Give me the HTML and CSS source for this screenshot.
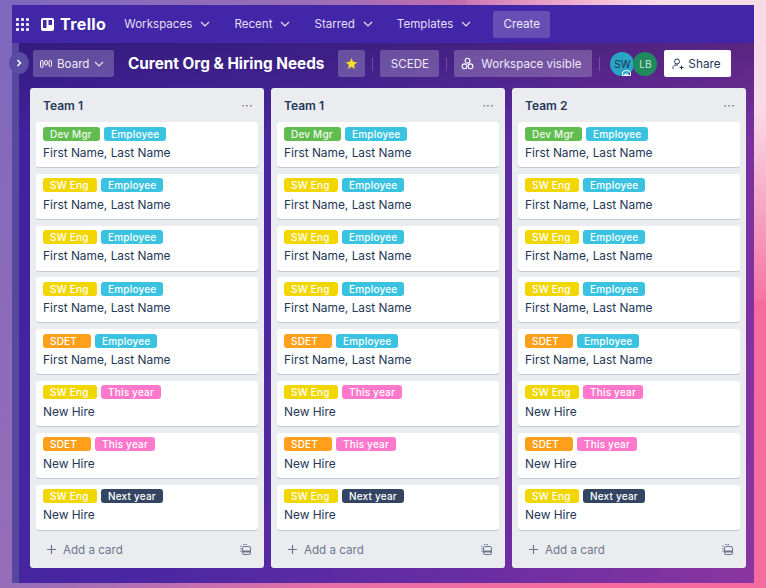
FILE: index.html
```html
<!DOCTYPE html>
<html lang="en">
<head>
    <meta charset="UTF-8">
    <title>Curent Org &amp; Hiring Needs | Trello</title>
    <link rel="stylesheet" href="styles.css">
</head>
<body>
    <div class="window">
        <header class="topbar">
            <svg class="apps" width="13" height="13" viewBox="0 0 13 13" fill="#fff">
                <rect x="0" y="0" width="3" height="3" rx=".7"/><rect x="5" y="0" width="3" height="3" rx=".7"/><rect x="10" y="0" width="3" height="3" rx=".7"/>
                <rect x="0" y="5" width="3" height="3" rx=".7"/><rect x="5" y="5" width="3" height="3" rx=".7"/><rect x="10" y="5" width="3" height="3" rx=".7"/>
                <rect x="0" y="10" width="3" height="3" rx=".7"/><rect x="5" y="10" width="3" height="3" rx=".7"/><rect x="10" y="10" width="3" height="3" rx=".7"/>
            </svg>
            <div class="logo">
                <svg width="13" height="13" viewBox="0 0 13 13"><path fill="#fff" fill-rule="evenodd" d="M2 0h9a2 2 0 0 1 2 2v9a2 2 0 0 1-2 2H2a2 2 0 0 1-2-2V2a2 2 0 0 1 2-2zm0 2v8h3.500V2zm5.500 0v5H11V2z"/></svg>
                <span>Trello</span>
            </div>
            <nav class="menu">
                <span class="menu-item">Workspaces <svg class="chev" viewBox="0 0 10 6"><path d="M1 1l4 4 4-4"/></svg></span>
                <span class="menu-item">Recent <svg class="chev" viewBox="0 0 10 6"><path d="M1 1l4 4 4-4"/></svg></span>
                <span class="menu-item">Starred <svg class="chev" viewBox="0 0 10 6"><path d="M1 1l4 4 4-4"/></svg></span>
                <span class="menu-item">Templates <svg class="chev" viewBox="0 0 10 6"><path d="M1 1l4 4 4-4"/></svg></span>
            </nav>
            <button class="create" type="button">Create</button>
        </header>

        <div class="content">
            <div class="side-strip">
                <span class="side-toggle"><svg width="6" height="8" viewBox="0 0 6 8"><path d="M1.500 1l3 3-3 3" fill="none" stroke="#fff" stroke-width="1.500"/></svg></span>
            </div>
            <main class="board">
                <div class="board-bar">
                    <button class="bar-btn view-btn" type="button">
                        <svg width="12" height="8" viewBox="0 0 12 8" fill="none" stroke="#fff" stroke-width="1"><rect x=".5" y=".5" width="2.500" height="7" rx="1"/><rect x="4.750" y=".5" width="2.500" height="4.500" rx="1"/><rect x="9" y=".5" width="2.500" height="6" rx="1"/></svg>
                        Board
                        <svg class="chev" viewBox="0 0 10 6"><path d="M1 1l4 4 4-4"/></svg>
                    </button>
                    <h1 class="board-title">Curent Org &amp; Hiring Needs</h1>
                    <button class="bar-btn star-btn" type="button">
                        <svg width="13" height="13" viewBox="0 0 24 24"><path fill="#f5dd29" d="M12 2l3 6.900 7.500.7-5.700 5 1.700 7.400L12 18l-6.500 4 1.700-7.400-5.700-5L9 8.900z"/></svg>
                    </button>
                    <span class="divider"></span>
                    <button class="bar-btn scede-btn" type="button">SCEDE</button>
                    <span class="divider"></span>
                    <button class="bar-btn visible-btn" type="button">
                        <svg width="13" height="13" viewBox="0 0 14 14" fill="none" stroke="#fff" stroke-width="1.200"><circle cx="7" cy="4" r="2.600"/><circle cx="3.800" cy="10" r="2.600"/><circle cx="10.200" cy="10" r="2.600"/></svg>
                        Workspace visible
                    </button>
                    <span class="divider"></span>
                    <div class="avatars">
                        <span class="avatar avatar-sw">SW
                            <svg class="avatar-badge" width="9" height="6" viewBox="0 0 9 6" fill="none" stroke="#fff" stroke-width="1"><path d="M.5 5.500V3a4 2.500 0 0 1 8 0v2.500zM3 5.500V4h3v1.500"/></svg>
                        </span>
                        <span class="avatar avatar-lb">LB</span>
                    </div>
                    <button class="share-btn" type="button">
                        <svg width="12" height="12" viewBox="0 0 12 12" fill="none" stroke="#253858" stroke-width="1"><circle cx="5" cy="3.500" r="2.500"/><path d="M1 11V9.500C1 8 2.500 7 4 7h2M9.500 7.500v4M7.500 9.500h4"/></svg>
                        Share
                    </button>
                </div>

                <div class="lists">
                    <section class="list">
                        <div class="list-head"><h2>Team 1</h2><span class="dots">···</span></div>
                        <div class="card"><div class="labels"><span class="label green">Dev Mgr</span><span class="label sky">Employee</span></div><p>First Name, Last Name</p></div>
                        <div class="card"><div class="labels"><span class="label yellow">SW Eng</span><span class="label sky">Employee</span></div><p>First Name, Last Name</p></div>
                        <div class="card"><div class="labels"><span class="label yellow">SW Eng</span><span class="label sky">Employee</span></div><p>First Name, Last Name</p></div>
                        <div class="card"><div class="labels"><span class="label yellow">SW Eng</span><span class="label sky">Employee</span></div><p>First Name, Last Name</p></div>
                        <div class="card"><div class="labels"><span class="label orange">SDET</span><span class="label sky">Employee</span></div><p>First Name, Last Name</p></div>
                        <div class="card"><div class="labels"><span class="label yellow">SW Eng</span><span class="label pink">This year</span></div><p>New Hire</p></div>
                        <div class="card"><div class="labels"><span class="label orange">SDET</span><span class="label pink">This year</span></div><p>New Hire</p></div>
                        <div class="card"><div class="labels"><span class="label yellow">SW Eng</span><span class="label navy">Next year</span></div><p>New Hire</p></div>
                        <div class="list-foot">
                            <span class="add-card"><svg width="11" height="11" viewBox="0 0 11 11"><path d="M5.500 1v9M1 5.500h9" stroke="#6b778c" stroke-width="1.200"/></svg>Add a card</span>
                            <svg class="template" width="11" height="11" viewBox="0 0 11 11" fill="none" stroke="#6b778c"><path d="M1 8V1.500h.01M3 .5h5" stroke-dasharray="1.500 1"/><rect x="2.500" y="2.500" width="8" height="8" rx="1.500"/><path d="M3 7.500h7" stroke-width="2"/></svg>
                        </div>
                    </section>

                    <section class="list">
                        <div class="list-head"><h2>Team 1</h2><span class="dots">···</span></div>
                        <div class="card"><div class="labels"><span class="label green">Dev Mgr</span><span class="label sky">Employee</span></div><p>First Name, Last Name</p></div>
                        <div class="card"><div class="labels"><span class="label yellow">SW Eng</span><span class="label sky">Employee</span></div><p>First Name, Last Name</p></div>
                        <div class="card"><div class="labels"><span class="label yellow">SW Eng</span><span class="label sky">Employee</span></div><p>First Name, Last Name</p></div>
                        <div class="card"><div class="labels"><span class="label yellow">SW Eng</span><span class="label sky">Employee</span></div><p>First Name, Last Name</p></div>
                        <div class="card"><div class="labels"><span class="label orange">SDET</span><span class="label sky">Employee</span></div><p>First Name, Last Name</p></div>
                        <div class="card"><div class="labels"><span class="label yellow">SW Eng</span><span class="label pink">This year</span></div><p>New Hire</p></div>
                        <div class="card"><div class="labels"><span class="label orange">SDET</span><span class="label pink">This year</span></div><p>New Hire</p></div>
                        <div class="card"><div class="labels"><span class="label yellow">SW Eng</span><span class="label navy">Next year</span></div><p>New Hire</p></div>
                        <div class="list-foot">
                            <span class="add-card"><svg width="11" height="11" viewBox="0 0 11 11"><path d="M5.500 1v9M1 5.500h9" stroke="#6b778c" stroke-width="1.200"/></svg>Add a card</span>
                            <svg class="template" width="11" height="11" viewBox="0 0 11 11" fill="none" stroke="#6b778c"><path d="M1 8V1.500h.01M3 .5h5" stroke-dasharray="1.500 1"/><rect x="2.500" y="2.500" width="8" height="8" rx="1.500"/><path d="M3 7.500h7" stroke-width="2"/></svg>
                        </div>
                    </section>

                    <section class="list">
                        <div class="list-head"><h2>Team 2</h2><span class="dots">···</span></div>
                        <div class="card"><div class="labels"><span class="label green">Dev Mgr</span><span class="label sky">Employee</span></div><p>First Name, Last Name</p></div>
                        <div class="card"><div class="labels"><span class="label yellow">SW Eng</span><span class="label sky">Employee</span></div><p>First Name, Last Name</p></div>
                        <div class="card"><div class="labels"><span class="label yellow">SW Eng</span><span class="label sky">Employee</span></div><p>First Name, Last Name</p></div>
                        <div class="card"><div class="labels"><span class="label yellow">SW Eng</span><span class="label sky">Employee</span></div><p>First Name, Last Name</p></div>
                        <div class="card"><div class="labels"><span class="label orange">SDET</span><span class="label sky">Employee</span></div><p>First Name, Last Name</p></div>
                        <div class="card"><div class="labels"><span class="label yellow">SW Eng</span><span class="label pink">This year</span></div><p>New Hire</p></div>
                        <div class="card"><div class="labels"><span class="label orange">SDET</span><span class="label pink">This year</span></div><p>New Hire</p></div>
                        <div class="card"><div class="labels"><span class="label yellow">SW Eng</span><span class="label navy">Next year</span></div><p>New Hire</p></div>
                        <div class="list-foot">
                            <span class="add-card"><svg width="11" height="11" viewBox="0 0 11 11"><path d="M5.500 1v9M1 5.500h9" stroke="#6b778c" stroke-width="1.200"/></svg>Add a card</span>
                            <svg class="template" width="11" height="11" viewBox="0 0 11 11" fill="none" stroke="#6b778c"><path d="M1 8V1.500h.01M3 .5h5" stroke-dasharray="1.500 1"/><rect x="2.500" y="2.500" width="8" height="8" rx="1.500"/><path d="M3 7.500h7" stroke-width="2"/></svg>
                        </div>
                    </section>
                </div>
            </main>
        </div>
    </div>
</body>
</html>
```

FILE: styles.css
```css
* {
    box-sizing: border-box;
}
html, body {
    height: 100%;
}
body {
    margin: 0;
    padding: 5px 12px;
    overflow: hidden;
    font-family: Inter, "Liberation Sans", sans-serif;
    background: linear-gradient(115deg, #7d68bd 0%, #9a6eb8 30%, #e86ea6 58%, #f76c9e 85%);
}
body::before {
    content: "";
    position: fixed;
    top: 0;
    right: 0;
    width: 300px;
    height: 300px;
    background: radial-gradient(circle at top right, #f9dbe8 25%, rgba(249, 219, 232, 0) 75%);
    z-index: -1;
}
button {
    font-family: inherit;
    border: none;
    cursor: pointer;
}
.window {
    height: 578px;
    display: flex;
    flex-direction: column;
}

/* top bar */
.topbar {
    height: 38px;
    flex: none;
    display: flex;
    align-items: center;
    padding-left: 4px;
    background-color: #4127a8;
    color: #fff;
}
.apps {
    opacity: .9;
}
.logo {
    display: flex;
    align-items: center;
    gap: 6px;
    margin-left: 12px;
    font-size: 16px;
    font-weight: 700;
    letter-spacing: .4px;
}
.menu {
    display: flex;
    gap: 24px;
    margin-left: 18px;
}
.menu-item {
    display: flex;
    align-items: center;
    gap: 8px;
    font-size: 11.600px;
    color: #e4dff5;
}
.chev {
    width: 10px;
    height: 6px;
    fill: none;
    stroke: #e4dff5;
    stroke-width: 1.200;
}
.create {
    height: 27px;
    width: 57px;
    margin-left: 22px;
    border-radius: 2px;
    font-size: 11.600px;
    color: #eeeafa;
    background-color: #674eb5;
}

/* board */
.content {
    flex: 1;
    display: flex;
    min-height: 0;
}
.side-strip {
    width: 7px;
    flex: none;
    position: relative;
    background-color: #56479f;
}
.side-toggle {
    position: absolute;
    left: -3px;
    top: 9px;
    width: 20px;
    height: 22px;
    border-radius: 50%;
    display: flex;
    align-items: center;
    justify-content: center;
    background-color: #5a4ca2;
    z-index: 1;
}
.board {
    flex: 1;
    padding: 7px 8px 0 11px;
    background:
        linear-gradient(to bottom, rgba(20, 10, 40, .28), rgba(20, 10, 40, 0) 18%),
        linear-gradient(110deg, #3f229e 0%, #4b27a3 35%, #6c2ea2 72%, #8a35a0 100%);
}
.board-bar {
    height: 27px;
    display: flex;
    align-items: center;
    margin-left: 3px;
    color: #fff;
}
.bar-btn {
    height: 27px;
    display: flex;
    align-items: center;
    border-radius: 2px;
    font-size: 11.600px;
    color: #efeaf7;
    background-color: rgba(255, 255, 255, .22);
}
.view-btn {
    width: 81px;
    padding-left: 7px;
    gap: 5px;
}
.board-title {
    margin: 0 14px;
    font-size: 15.300px;
    font-weight: 700;
    white-space: nowrap;
    color: #fff;
}
.star-btn {
    width: 27px;
    justify-content: center;
}
.divider {
    width: 1px;
    height: 14px;
    margin: 0 7px;
    background-color: rgba(255, 255, 255, .2);
}
.scede-btn {
    width: 59px;
    justify-content: center;
}
.visible-btn {
    width: 138px;
    padding-left: 7px;
    gap: 7px;
    white-space: nowrap;
}
.avatars {
    display: flex;
    margin-left: 3px;
}
.avatar {
    width: 24px;
    height: 24px;
    border-radius: 50%;
    display: flex;
    align-items: center;
    justify-content: center;
    position: relative;
    font-size: 10px;
}
.avatar-sw {
    background-color: #2aa3c4;
    color: #17395c;
}
.avatar-lb {
    margin-left: -1px;
    background-color: #1f8a5d;
    color: #cfe8dc;
}
.avatar-badge {
    position: absolute;
    right: 3px;
    bottom: 0;
}
.share-btn {
    width: 67px;
    height: 27px;
    margin-left: 7px;
    padding: 0 0 0 8px;
    display: flex;
    align-items: center;
    gap: 4px;
    border-radius: 2px;
    font-size: 11.800px;
    color: #253858;
    background-color: #fff;
}

/* lists */
.lists {
    display: flex;
    gap: 7px;
    margin-top: 11px;
}
.list {
    width: 234px;
    height: 480px;
    padding: 0 6px;
    border-radius: 3px;
    background-color: #ebecf0;
}
.list-head {
    height: 34px;
    display: flex;
    align-items: center;
    justify-content: space-between;
    padding: 0 5px 0 7px;
}
.list-head h2 {
    margin: 0;
    font-size: 12px;
    font-weight: 600;
    color: #253858;
}
.dots {
    font-size: 13px;
    font-weight: 400;
    letter-spacing: .2px;
    color: #6b778c;
}
.card {
    height: 45px;
    margin-bottom: 6.800px;
    padding: 4.500px 7px;
    border-radius: 3px;
    background-color: #fff;
    box-shadow: 0 1px 0 #c3c8d4;
}
.labels {
    display: flex;
    gap: 4px;
}
.label {
    height: 14px;
    padding: 0 7px;
    border-radius: 3px;
    font-size: 10px;
    font-weight: 500;
    line-height: 14px;
    letter-spacing: .2px;
    color: #fff;
}
.label.green {
    min-width: 57px;
    background-color: #61bd4f;
    color: #f0f9ee;
}
.label.sky {
    background-color: #39c3e0;
}
.label.yellow {
    min-width: 54px;
    background-color: #f2d600;
}
.label.orange {
    width: 48px;
    background-color: #ff9f1a;
}
.label.pink {
    background-color: #ff78cb;
}
.label.navy {
    background-color: #344563;
}
.card p {
    margin: 4.400px 0 0;
    font-size: 11.900px;
    line-height: 15px;
    color: #253858;
}
.list-foot {
    height: 29px;
    margin-top: -1px;
    display: flex;
    align-items: center;
    justify-content: space-between;
    padding: 0 7px 0 10px;
}
.add-card {
    display: flex;
    align-items: center;
    gap: 6px;
    font-size: 11.600px;
    color: #6b778c;
}
```
